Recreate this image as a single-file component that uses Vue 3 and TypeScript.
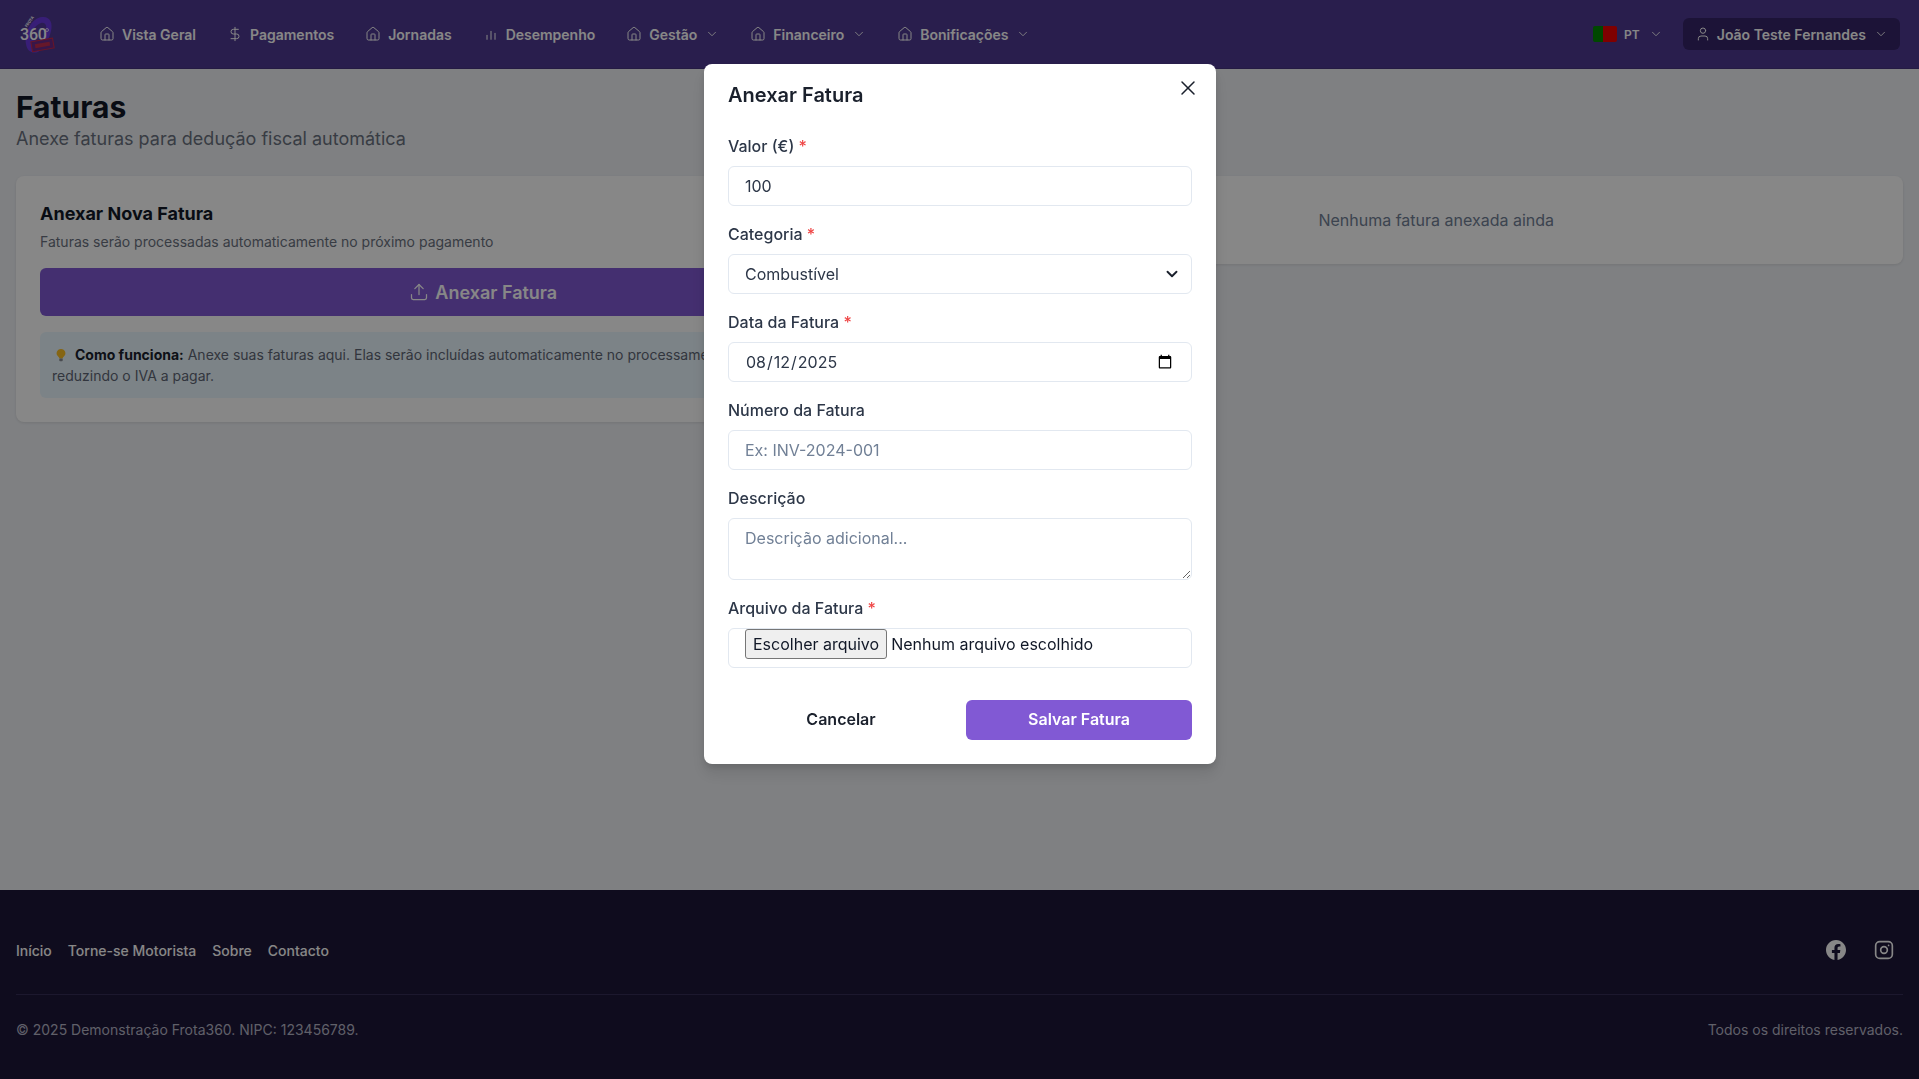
<script setup lang="ts">
import { ref } from "vue";

const icons: Record<string, string[]> = {
  house: [
    "M15 21v-8a1 1 0 0 0-1-1h-4a1 1 0 0 0-1 1v8",
    "M3 10a2 2 0 0 1 .709-1.528l7-5.999a2 2 0 0 1 2.582 0l7 5.999A2 2 0 0 1 21 10v9a2 2 0 0 1-2 2H5a2 2 0 0 1-2-2z",
  ],
  dollar: ["M12 2v20", "M17 5H9.5a3.5 3.5 0 0 0 0 7h5a3.5 3.5 0 0 1 0 7H6"],
  bars: ["M6 20v-6", "M12 20V8", "M18 20v-9"],
};

const navItems = [
  { label: "Vista Geral", icon: "house", menu: false },
  { label: "Pagamentos", icon: "dollar", menu: false },
  { label: "Jornadas", icon: "house", menu: false },
  { label: "Desempenho", icon: "bars", menu: false },
  { label: "Gestão", icon: "house", menu: true },
  { label: "Financeiro", icon: "house", menu: true },
  { label: "Bonificações", icon: "house", menu: true },
];

const footerLinks = ["Início", "Torne-se Motorista", "Sobre", "Contacto"];

const valor = ref("100");
const categoria = ref("Combustível");
const data = ref("2025-08-12");
const numero = ref("");
const descricao = ref("");
</script>

<template>
  <div class="page">
    <header class="topbar">
      <svg class="logo" viewBox="0 0 40 40" aria-label="Frota 360">
        <path d="M10 30 C8 18 16 4 26 3 C34 2 37 9 35 17 C33 26 28 33 22 38 C16 40 11 37 10 30z" fill="#6a3ae0" />
        <path d="M14 26 C14 18 19 11 25 9 C29 8 31 11 30 16 C29 21 26 25 22 27z" fill="#52389c" />
        <text x="11" y="13.5" class="logo-small" transform="rotate(-56 11 13.5)">FROTA</text>
        <text x="4" y="26" class="logo-big">360</text>
        <circle cx="31" cy="16" r="1.5" fill="none" stroke="#fff" stroke-width="0.7" />
        <g transform="rotate(-10 26 31)">
          <rect x="15.5" y="26" width="22" height="10" fill="#6a2a8a" stroke="#c82848" stroke-width="1" />
          <rect x="19" y="29" width="15" height="4" fill="#c02c50" />
        </g>
      </svg>

      <nav class="nav">
        <a v-for="item in navItems" :key="item.label" class="nav-item">
          <svg class="icon" viewBox="0 0 24 24">
            <path v-for="d in icons[item.icon]" :key="d" :d="d" />
          </svg>
          <span>{{ item.label }}</span>
          <svg v-if="item.menu" class="chev" viewBox="0 0 24 24"><path d="m6 9 6 6 6-6" /></svg>
        </a>
      </nav>

      <div class="top-right">
        <div class="lang">
          <span class="flag"></span>
          <span>PT</span>
          <svg class="chev" viewBox="0 0 24 24"><path d="m6 9 6 6 6-6" /></svg>
        </div>
        <div class="user">
          <svg class="icon" viewBox="0 0 24 24">
            <path d="M19 21v-2a4 4 0 0 0-4-4H9a4 4 0 0 0-4 4v2" />
            <circle cx="12" cy="7" r="4" />
          </svg>
          <span>João Teste Fernandes</span>
          <svg class="chev" viewBox="0 0 24 24"><path d="m6 9 6 6 6-6" /></svg>
        </div>
      </div>
    </header>

    <main class="main">
      <h1>Faturas</h1>
      <p class="subtitle">Anexe faturas para dedução fiscal automática</p>

      <div class="columns">
        <section class="card">
          <h2>Anexar Nova Fatura</h2>
          <p class="hint">Faturas serão processadas automaticamente no próximo pagamento</p>
          <button class="upload-btn" type="button">
            <svg class="icon" viewBox="0 0 24 24">
              <path d="M21 15v4a2 2 0 0 1-2 2H5a2 2 0 0 1-2-2v-4" />
              <path d="m17 8-5-5-5 5" />
              <path d="M12 3v12" />
            </svg>
            Anexar Fatura
          </button>
          <div class="tip">
            <svg class="bulb" viewBox="0 0 16 16">
              <path d="M8 1a5 5 0 0 0-3 9c.7.6 1 1.2 1 2h4c0-.8.3-1.4 1-2a5 5 0 0 0-3-9z" fill="#fbbf24" />
              <rect x="6" y="12" width="4" height="3" rx="1" fill="#8b8f98" />
            </svg>
            <strong>Como funciona:</strong> Anexe suas faturas aqui. Elas serão incluídas automaticamente no
            processamento do próximo pagamento, reduzindo o IVA a pagar.
          </div>
        </section>
        <section class="card empty">Nenhuma fatura anexada ainda</section>
      </div>
    </main>

    <footer class="footer">
      <div class="footer-top">
        <div class="footer-links">
          <a v-for="link in footerLinks" :key="link">{{ link }}</a>
        </div>
        <div class="social">
          <a>
            <svg class="social-icon" viewBox="0 0 24 24">
              <path
                class="filled"
                d="M24 12.073c0-6.627-5.373-12-12-12s-12 5.373-12 12c0 5.99 4.388 10.954 10.125 11.854v-8.385H7.078v-3.47h3.047V9.43c0-3.007 1.792-4.669 4.533-4.669 1.312 0 2.686.235 2.686.235v2.953H15.83c-1.491 0-1.956.925-1.956 1.874v2.25h3.328l-.532 3.47h-2.796v8.385C19.612 23.027 24 18.062 24 12.073z"
              />
            </svg>
          </a>
          <a>
            <svg class="social-icon" viewBox="0 0 24 24">
              <rect x="2" y="2" width="20" height="20" rx="5" />
              <circle cx="12" cy="12" r="4" />
              <path d="M17.5 6.5h.01" />
            </svg>
          </a>
        </div>
      </div>
      <div class="footer-bottom">
        <span>© 2025 Demonstração Frota360. NIPC: 123456789.</span>
        <span>Todos os direitos reservados.</span>
      </div>
    </footer>

    <div class="overlay">
      <div class="modal">
        <button class="close" type="button" aria-label="Fechar">
          <svg viewBox="0 0 24 24"><path d="M18 6 6 18" /><path d="m6 6 12 12" /></svg>
        </button>
        <h3>Anexar Fatura</h3>
        <form class="form" @submit.prevent>
          <div class="field">
            <label>Valor (€) <span class="req">*</span></label>
            <input v-model="valor" type="text" />
          </div>
          <div class="field">
            <label>Categoria <span class="req">*</span></label>
            <div class="select-wrap">
              <select v-model="categoria">
                <option>Combustível</option>
              </select>
              <svg class="select-arrow" viewBox="0 0 24 24"><path d="m6 9 6 6 6-6" /></svg>
            </div>
          </div>
          <div class="field">
            <label>Data da Fatura <span class="req">*</span></label>
            <input v-model="data" type="date" />
          </div>
          <div class="field">
            <label>Número da Fatura</label>
            <input v-model="numero" type="text" placeholder="Ex: INV-2024-001" />
          </div>
          <div class="field">
            <label>Descrição</label>
            <textarea v-model="descricao" placeholder="Descrição adicional..."></textarea>
          </div>
          <div class="field">
            <label>Arquivo da Fatura <span class="req">*</span></label>
            <div class="file">
              <button type="button" class="file-btn">Escolher arquivo</button>
              <span>Nenhum arquivo escolhido</span>
            </div>
          </div>
          <div class="actions">
            <button type="button" class="cancel">Cancelar</button>
            <button type="submit" class="save">Salvar Fatura</button>
          </div>
        </form>
      </div>
    </div>
  </div>
</template>

<style>
html,
body {
  margin: 0;
  padding: 0;
}
</style>

<style scoped>
* {
  box-sizing: border-box;
}

.page {
  min-height: 1079px;
  display: flex;
  flex-direction: column;
  font-family: Inter, "Liberation Sans", sans-serif;
  background: #f0f2f6;
  color: #111827;
}

.topbar {
  height: 69px;
  display: flex;
  align-items: center;
  padding: 0 19px 0 16px;
  background: #4f3a91;
  color: #fff;
  border-bottom: 1px solid #46337f;
}

.logo {
  width: 40px;
  height: 40px;
  flex-shrink: 0;
}

.logo-big {
  font: 500 16px "Roboto", sans-serif;
  letter-spacing: -0.2px;
  fill: #fff;
}

.logo-small {
  font: 700 4px "Roboto", sans-serif;
  fill: #fff;
}

.nav {
  display: flex;
  align-items: center;
  gap: 7px;
  margin-left: 31px;
}

.nav-item {
  display: flex;
  align-items: center;
  gap: 7px;
  padding: 8px 12px;
  font-size: 14px;
  font-weight: 600;
  color: #fff;
}

.nav-item .chev {
  margin-left: 1px;
}

.icon {
  width: 16px;
  height: 16px;
  fill: none;
  stroke: currentColor;
  stroke-width: 1.5;
  stroke-linecap: round;
  stroke-linejoin: round;
  flex-shrink: 0;
}

.chev {
  width: 14px;
  height: 14px;
  fill: none;
  stroke: currentColor;
  stroke-width: 1.5;
  stroke-linecap: round;
  stroke-linejoin: round;
  flex-shrink: 0;
}

.top-right {
  margin-left: auto;
  display: flex;
  align-items: center;
  gap: 20px;
}

.lang {
  display: flex;
  align-items: center;
  gap: 7px;
  font-size: 12px;
  font-weight: 600;
}

.lang .chev {
  margin-left: 2px;
}

.flag {
  width: 24px;
  height: 16px;
  border-radius: 2px;
  background: linear-gradient(90deg, #008800 0 42%, #f00000 42% 100%);
}

.user {
  height: 32px;
  display: flex;
  align-items: center;
  padding: 0 12px;
  border-radius: 6px;
  background: #352468;
  font-size: 14px;
  font-weight: 600;
}

.user span {
  margin: 0 8px 0 6px;
}

.main {
  flex: 1;
  padding: 20px 16px 0;
}

h1 {
  margin: 0;
  font-size: 30px;
  line-height: 36px;
  font-weight: 700;
}

.subtitle {
  margin: 0;
  font-size: 18px;
  line-height: 28px;
  color: #6b7280;
}

.columns {
  display: grid;
  grid-template-columns: 1fr 1fr;
  gap: 24px;
  align-items: start;
  margin-top: 23px;
}

.card {
  padding: 24px;
  background: #fff;
  border-radius: 8px;
  box-shadow: 0 1px 3px rgba(0, 0, 0, 0.1);
}

h2 {
  margin: 0;
  font-size: 18px;
  line-height: 28px;
  font-weight: 700;
}

.hint {
  margin: 4px 0 16px;
  font-size: 14px;
  line-height: 20px;
  color: #6b7280;
}

.upload-btn {
  width: 100%;
  height: 48px;
  display: flex;
  align-items: center;
  justify-content: center;
  gap: 6px;
  padding: 0 0 0 3px;
  border: none;
  border-radius: 6px;
  background: #8159d4;
  color: #fff;
  font: 600 18px Inter, sans-serif;
}

.upload-btn .icon {
  width: 20px;
  height: 20px;
}

.tip {
  margin-top: 16px;
  padding: 12px;
  border-radius: 6px;
  background: #ebf8ff;
  font-size: 14px;
  line-height: 21px;
  color: #5f6675;
}

.tip strong {
  color: #1a202c;
}

.bulb {
  width: 14px;
  height: 14px;
  margin: 0 7px 0 2px;
  vertical-align: -2px;
}

.empty {
  height: 88px;
  display: flex;
  align-items: center;
  justify-content: center;
  padding: 0 26px 0 24px;
  font-size: 16px;
  color: #718096;
}

.footer {
  height: 189px;
  padding: 0 16px;
  background: #1e1839;
  color: #fff;
}

.footer-top {
  height: 105px;
  display: flex;
  align-items: center;
  justify-content: space-between;
  padding-top: 16px;
  border-bottom: 1px solid #352e58;
}

.footer-links {
  display: flex;
  gap: 16px;
  font-size: 14px;
  font-weight: 500;
}

.social {
  display: flex;
  gap: 12px;
  margin-right: 1px;
}

.social a {
  display: flex;
  padding: 8px;
}

.social-icon {
  width: 20px;
  height: 20px;
  fill: none;
  stroke: currentColor;
  stroke-width: 2;
  stroke-linecap: round;
  stroke-linejoin: round;
}

.social-icon .filled {
  fill: currentColor;
  stroke: none;
}

.footer-bottom {
  display: flex;
  justify-content: space-between;
  padding-top: 25px;
  font-size: 14px;
  line-height: 20px;
  color: #b5b5c6;
}

.overlay {
  position: fixed;
  inset: 0;
  display: flex;
  justify-content: center;
  align-items: flex-start;
  padding: 64px 0 0 1px;
  background: rgba(0, 0, 0, 0.47);
}

.modal {
  position: relative;
  width: 512px;
  padding: 17px 24px 24px;
  background: #fff;
  border-radius: 8px;
  box-shadow: 0 10px 15px rgba(0, 0, 0, 0.1), 0 4px 6px rgba(0, 0, 0, 0.1);
  color: #2d3748;
}

.close {
  position: absolute;
  top: 12px;
  right: 16px;
  width: 24px;
  height: 24px;
  padding: 0;
  border: none;
  background: none;
  color: #1a202c;
}

.close svg {
  display: block;
  fill: none;
  stroke: currentColor;
  stroke-width: 1.5;
  stroke-linecap: round;
}

h3 {
  margin: 0 0 25px;
  font-size: 20px;
  line-height: 28px;
  font-weight: 600;
  color: #1a202c;
}

.form {
  display: flex;
  flex-direction: column;
  gap: 16px;
}

.field {
  display: flex;
  flex-direction: column;
  gap: 8px;
}

label {
  font-size: 16px;
  line-height: 24px;
  font-weight: 500;
}

.req {
  color: #ef4444;
}

input,
select,
textarea,
.file {
  width: 100%;
  height: 40px;
  padding: 0 16px;
  border: 1px solid #e2e8f0;
  border-radius: 6px;
  background: #fff;
  font: 400 16px Inter, sans-serif;
  color: #2d3748;
  outline: none;
}

select {
  appearance: none;
  display: block;
}

.select-wrap {
  position: relative;
}

.select-arrow {
  position: absolute;
  top: 11px;
  right: 11px;
  width: 18px;
  height: 18px;
  fill: none;
  stroke: #1a202c;
  stroke-width: 2.5;
  stroke-linecap: round;
  stroke-linejoin: round;
  pointer-events: none;
}

input::placeholder,
textarea::placeholder {
  color: #718096;
}

textarea {
  height: 62px;
  padding-top: 7px;
  padding-bottom: 8px;
  line-height: 24px;
  display: block;
}

.file {
  display: flex;
  align-items: flex-start;
  gap: 4px;
  color: #111827;
}

.file span {
  line-height: 30px;
}

.file-btn {
  height: 30px;
  padding: 0 7px;
  border: 1px solid #767676;
  border-radius: 3px;
  background: #efefef;
  font: 400 16px Inter, sans-serif;
  color: #111827;
}

.actions {
  display: grid;
  grid-template-columns: 1fr 1fr;
  gap: 12px;
  margin-top: 16px;
}

.actions button {
  height: 40px;
  padding: 0 0 2px;
  border: none;
  border-radius: 6px;
  font: 600 16px Inter, sans-serif;
}

.cancel {
  background: #fff;
  color: #1a202c;
}

.save {
  background: #8159d4;
  color: #fff;
}
</style>
